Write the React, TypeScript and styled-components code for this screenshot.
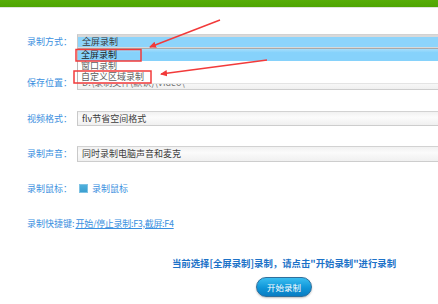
import React from 'react';
import styled, { createGlobalStyle } from 'styled-components';

const GlobalStyle = createGlobalStyle`
  html, body {
    margin: 0;
    padding: 0;
    background: #ffffff;
  }
  body {
    font-family: "Noto Sans CJK SC", "Liberation Sans", sans-serif;
    width: 438px;
    height: 304px;
    overflow: hidden;
  }
`;

const modeOptions = ['全屏录制', '窗口录制', '自定义区域录制'];

export default function App() {
  return (
    <Page>
      <GlobalStyle />
      <TopBar />
      <Form>
        <Row>
          <Label>录制方式：</Label>
          <SelectWrap>
            <Select $focused>
              <SelectInner $focused>全屏录制</SelectInner>
            </Select>
            <DropList>
              {modeOptions.map((opt, idx) => (
                <DropItem key={opt} $active={idx === 0} $tall={idx !== 1}>
                  {opt}
                </DropItem>
              ))}
            </DropList>
          </SelectWrap>
        </Row>
        <Row $extra={6}>
          <Label>保存位置：</Label>
          <Select>
            <SelectInner $muted>D:\录制文件(默认)\Video\</SelectInner>
          </Select>
        </Row>
        <Row $extra={1}>
          <Label>视频格式：</Label>
          <Select>
            <SelectInner>flv节省空间格式</SelectInner>
          </Select>
        </Row>
        <Row>
          <Label>录制声音：</Label>
          <Select $tall>
            <SelectInner>同时录制电脑声音和麦克</SelectInner>
          </Select>
        </Row>
        <Row>
          <Label>录制鼠标：</Label>
          <CheckBox />
          <CheckText>录制鼠标</CheckText>
        </Row>
        <Row>
          <Label $auto>录制快捷键:</Label>
          <HotkeyLink>开始/停止录制:F3,截屏:F4</HotkeyLink>
        </Row>
        <Footer>
          <Notice>当前选择[全屏录制]录制，请点击"开始录制"进行录制</Notice>
          <StartButton>开始录制</StartButton>
        </Footer>
      </Form>
      <Marks width="438" height="304" viewBox="0 0 438 304">
        <defs>
          <marker id="head" markerWidth="8" markerHeight="8" refX="6" refY="4" orient="auto" markerUnits="userSpaceOnUse">
            <path d="M0,0.8 L7,4 L0,7.2 Z" fill="#f23a3a" />
          </marker>
        </defs>
        <line x1="220" y1="20" x2="150" y2="47" stroke="#f23a3a" strokeWidth="1.4" markerEnd="url(#head)" />
        <line x1="267" y1="60" x2="161" y2="74" stroke="#f23a3a" strokeWidth="1.4" markerEnd="url(#head)" />
        <rect x="76" y="49.5" width="65" height="11.5" fill="none" stroke="#f23a3a" strokeWidth="1.5" />
        <rect x="74" y="71" width="77" height="12" fill="none" stroke="#f23a3a" strokeWidth="1.5" />
      </Marks>
    </Page>
  );
}

const Page = styled.div`
  position: relative;
  width: 438px;
  height: 304px;
  overflow: hidden;
  background: #ffffff;
`;

const TopBar = styled.div`
  height: 7px;
  background: linear-gradient(#57ad08, #4ea502);
  border-bottom: 1px solid #dfe6da;
`;

const Form = styled.div`
  display: flex;
  flex-direction: column;
  gap: 20px;
  padding: 26px 0 0 27px;
`;

const Row = styled.div<{ $extra?: number }>`
  display: flex;
  align-items: center;
  height: 15px;
  margin-top: ${({ $extra }) => $extra ?? 0}px;
`;

const Label = styled.div<{ $auto?: boolean }>`
  flex: 0 0 ${({ $auto }) => ($auto ? 'auto' : '50px')};
  font-size: 9px;
  line-height: 15px;
  color: #3a8fe0;
  white-space: nowrap;
`;

const SelectWrap = styled.div`
  position: relative;
  flex: 1;
  height: 15px;
`;

const Select = styled.div<{ $focused?: boolean; $tall?: boolean }>`
  flex: 1;
  height: ${({ $tall }) => ($tall ? 16 : 15)}px;
  box-sizing: border-box;
  border-top: 1px solid #d2d2d2;
  border-bottom: 1px solid #cdcdcd;
  border-left: 1px solid #c9c9c9;
  background: linear-gradient(#f1f1f1, #fbfbfb 40%, #f0f0f0);
  padding: ${({ $focused }) => ($focused ? '2px 0 1px 0' : '0')};
  ${({ $focused }) => ($focused ? 'background: #d9d9d9; border-bottom-color: #a9a9a9;' : '')}
`;

const SelectInner = styled.div<{ $focused?: boolean; $muted?: boolean }>`
  height: 100%;
  box-sizing: border-box;
  padding-left: 4px;
  font-size: 9px;
  line-height: ${({ $focused }) => ($focused ? 10 : 13)}px;
  color: ${({ $muted }) => ($muted ? '#707070' : '#3c3c3c')};
  background: ${({ $focused }) => ($focused ? '#8dd4fb' : 'transparent')};
  white-space: nowrap;
  overflow: ${({ $focused }) => ($focused ? 'visible' : 'hidden')};
`;

const DropList = styled.div`
  position: absolute;
  top: 15px;
  left: 0;
  right: 0;
  z-index: 2;
  background: #ffffff;
  border-left: 1px solid #b9b9b9;
  border-bottom: 1px solid #e4e4e4;
`;

const DropItem = styled.div<{ $active: boolean; $tall: boolean }>`
  height: ${({ $tall }) => ($tall ? 12 : 10)}px;
  padding-left: 3px;
  font-size: 9px;
  line-height: ${({ $tall }) => ($tall ? 12 : 10)}px;
  color: ${({ $active }) => ($active ? '#1c1c1c' : '#606060')};
  background: ${({ $active }) => ($active ? 'linear-gradient(#a6defc, #86d2fb 30%)' : '#ffffff')};
  white-space: nowrap;
`;

const CheckBox = styled.div`
  width: 9px;
  height: 9px;
  margin: 0 4px 0 2px;
  background: linear-gradient(#4fb0dc, #3b9fd0);
  border: 1px solid #7fc3e4;
  box-sizing: border-box;
`;

const CheckText = styled.div`
  font-size: 9px;
  color: #3a8fe0;
`;

const HotkeyLink = styled.a`
  margin-left: 1px;
  font-size: 9px;
  line-height: 15px;
  color: #3a8fe0;
  text-decoration: underline;
  white-space: nowrap;
  letter-spacing: -0.3px;
`;

const Footer = styled.div`
  display: flex;
  flex-direction: column;
  align-items: center;
  gap: 8px;
  margin: 6px 0 0 103px;
`;

const Notice = styled.div`
  font-size: 9.4px;
  line-height: 12px;
  font-weight: 700;
  color: #1c72c8;
  white-space: nowrap;
`;

const StartButton = styled.button`
  width: 56px;
  height: 20px;
  border-radius: 10px;
  border: 1px solid #2f6f9c;
  background: linear-gradient(#39bdf0, #0f95d8 55%, #0a7cc2);
  box-shadow: 0 1px 2px rgba(0, 0, 0, 0.25);
  color: #ffffff;
  font-family: "Noto Sans CJK SC", sans-serif;
  font-size: 8.5px;
  padding: 0;
`;

const Marks = styled.svg`
  position: absolute;
  top: 0;
  left: 0;
  pointer-events: none;
  z-index: 3;
`;
